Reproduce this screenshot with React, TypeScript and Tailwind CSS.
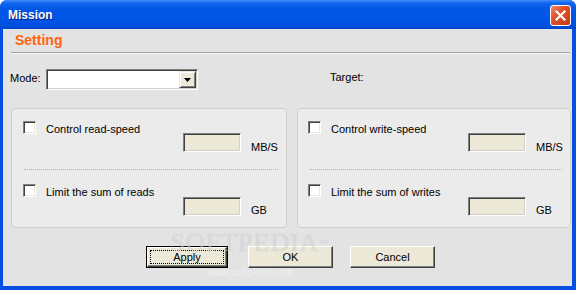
import React from "react";

const font = { fontFamily: '"Liberation Sans", Arial, sans-serif' };

function Check() {
  return (
    <div className="w-[13px] h-[13px] shrink-0 bg-white border border-t-[#808080] border-l-[#808080] border-b-[#ffffff] border-r-[#ffffff] shadow-[inset_1px_1px_0_#404040,inset_-1px_-1px_0_#ece9d8]" />
  );
}

function Field() {
  return (
    <div className="w-[58px] h-[19px] shrink-0 bg-[#ece9d8] border border-t-[#808080] border-l-[#808080] border-b-[#ffffff] border-r-[#ffffff] shadow-[inset_1px_1px_0_#404040,inset_-1px_-1px_0_#d4d0c8]" />
  );
}

function Group({ a, b, pl }: { a: string; b: string; pl: string }) {
  return (
    <div className={`h-[120px] rounded-[4px] border border-[#d0d0c8] bg-[#ebebeb] ${pl} pr-[8px]`}>
      <div className="flex h-[13px] mt-[12px]">
        <Check />
        <div className="ml-[10px] mt-[2px] leading-[13px] whitespace-nowrap">{a}</div>
      </div>
      <div className="flex h-[19px] -mt-[1px] ml-[160px]">
        <Field />
        <div className="ml-[10px] mt-[8px] leading-[13px]">MB/S</div>
      </div>
      <div className="mt-[17px] ml-[1px] border-t border-dotted border-[#a8b0bc]" />
      <div className="flex h-[13px] mt-[14px]">
        <Check />
        <div className="ml-[10px] mt-[2px] leading-[13px] whitespace-nowrap">{b}</div>
      </div>
      <div className="flex h-[19px] ml-[160px]">
        <Field />
        <div className="ml-[10px] mt-[7px] leading-[13px]">GB</div>
      </div>
    </div>
  );
}

function Btn({ label, def }: { label: string; def?: boolean }) {
  if (def) {
    return (
      <div className="w-[82px] h-[22px] border border-black">
        <div className="w-full h-full bg-[#ece9d8] border border-t-white border-l-white border-b-[#404040] border-r-[#404040] shadow-[inset_-1px_-1px_0_#808080] p-[2px]">
          <div className="w-full h-full border border-dotted border-black flex items-center justify-center leading-[13px]">
            {label}
          </div>
        </div>
      </div>
    );
  }
  return (
    <div className="w-[85px] h-[22px] bg-[#ece9d8] border border-t-white border-l-white border-b-[#404040] border-r-[#404040] shadow-[inset_-1px_-1px_0_#808080] flex items-center justify-center leading-[13px]">
      {label}
    </div>
  );
}

export default function App() {
  return (
    <div
      className="relative w-[576px] h-[290px] flex flex-col overflow-hidden rounded-t-[7px] bg-[#0550e0] text-[11px] text-black"
      style={font}
    >
      {/* title bar */}
      <div className="h-[29px] shrink-0 flex items-center pl-[8px] pr-[5px] bg-[linear-gradient(to_bottom,#3d8ff8_0px,#1466ee_3px,#0358e8_8px,#0055e6_18px,#0050df_25px,#0044cc_29px)]">
        <div
          className="text-white font-bold text-[12px] leading-[14px] mt-[1px] [text-shadow:1px_1px_0_#0a1e80]"
          style={font}
        >
          Mission
        </div>
        <div className="ml-auto w-[21px] h-[21px] mt-[1px] rounded-[3px] border border-white bg-[linear-gradient(135deg,#f08a6a_0%,#e0502a_40%,#c83a18_100%)] flex items-center justify-center">
          <svg width="11" height="11" viewBox="0 0 11 11">
            <path d="M1.5 1.5 L9.5 9.5 M9.5 1.5 L1.5 9.5" stroke="#ffffff" strokeWidth="2.2" strokeLinecap="square" />
          </svg>
        </div>
      </div>

      {/* body */}
      <div className="flex-1 ml-[3px] mr-[4px] mb-[4px] bg-[#e3e3e3] flex flex-col">
        <div className="ml-[12px] mt-[3px] text-[14px] leading-[16px] font-bold text-[#ff6410]">Setting</div>
        <div className="ml-[8px] mr-[2px] mt-[4px] h-[2px] border-t border-[#a4a4a4] border-b border-b-[#f4f4f4]" />

        <div className="flex items-center mt-[15px] h-[21px]">
          <div className="ml-[7px] w-[36px] -mt-[2px]">Mode:</div>
          <div className="w-[152px] h-[21px] bg-white border border-t-[#808080] border-l-[#808080] border-b-[#ffffff] border-r-[#ffffff] shadow-[inset_1px_1px_0_#404040,inset_-1px_-1px_0_#d4d0c8] flex justify-end p-[1px] pr-[1px]">
            <div className="w-[17px] h-full bg-[#ece9d8] border border-t-[#ece9d8] border-l-[#ece9d8] border-b-[#404040] border-r-[#404040] shadow-[inset_1px_1px_0_#fff,inset_-1px_-1px_0_#808080] flex items-center justify-center">
              <svg width="7" height="4" viewBox="0 0 7 4">
                <path d="M0 0 H7 L3.5 4 Z" fill="#000" />
              </svg>
            </div>
          </div>
          <div className="ml-[132px] -mt-[4px]">Target:</div>
        </div>

        <div className="flex mt-[18px] ml-[8px] gap-[10px]">
          <div className="w-[276px]">
            <Group a="Control read-speed" b="Limit the sum of reads" pl="pl-[11px]" />
          </div>
          <div className="w-[274px]">
            <Group a="Control write-speed" b="Limit the sum of writes" pl="pl-[10px]" />
          </div>
        </div>

        <div className="flex mt-[18px] ml-[143px]">
          <Btn label="Apply" def />
          <div className="ml-[20px]">
            <Btn label="OK" />
          </div>
          <div className="ml-[17px]">
            <Btn label="Cancel" />
          </div>
        </div>
      </div>

      {/* watermark */}
      <div
        className="absolute left-[150px] top-[229px] w-[200px] text-center text-[26px] leading-[28px] tracking-[1px] text-white/40 pointer-events-none [text-shadow:0_0_1px_rgba(120,120,120,0.35)]"
        style={{ fontFamily: '"Liberation Serif", "Times New Roman", serif' }}
      >
        SOFTPEDIA<span className="text-[9px] align-top">™</span>
      </div>
      <div
        className="absolute left-[200px] top-[267px] w-[100px] text-center text-[10px] leading-[12px] text-white/45 pointer-events-none"
        style={font}
      >
        www.softpedia.com
      </div>
    </div>
  );
}
